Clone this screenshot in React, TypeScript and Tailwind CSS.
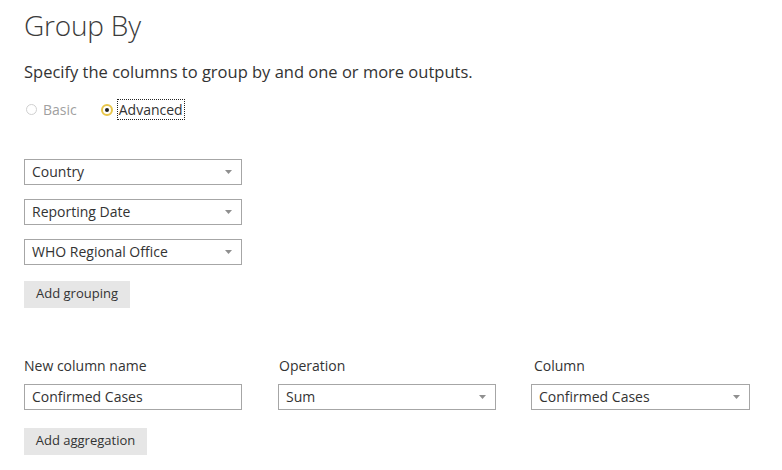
import React from "react";

const font = { fontFamily: '"Open Sans", "Noto Sans", sans-serif' };

const Caret = () => (
  <svg width="7" height="4" viewBox="0 0 7 4" className="shrink-0">
    <path d="M0 0h7L3.5 4z" fill="#8f8f8f" />
  </svg>
);

const Select = ({ value, w = "w-[218px]" }: { value: string; w?: string }) => (
  <div className={`${w} h-[26px] border border-[#a6a6a6] bg-white flex items-center justify-between pl-[7px] pr-[9px]`}>
    <span className="text-[14px] text-[#333] leading-none">{value}</span>
    <Caret />
  </div>
);

const GrayButton = ({ label, w }: { label: string; w: string }) => (
  <div className={`${w} h-[27px] bg-[#e6e6e6] flex items-center justify-center text-[13px] text-[#333]`}>
    {label}
  </div>
);

export default function App() {
  return (
    <div className="w-[782px] h-[470px] bg-white overflow-hidden pl-[24px]" style={font}>
      <h1 className="text-[28px] font-light text-[#3b3b3b] leading-none pt-[11px] tracking-[-0.2px]">Group By</h1>

      <p className="text-[16.5px] text-[#333] mt-[25px] leading-none">
        Specify the columns to group by and one or more outputs.
      </p>

      <div className="flex items-center mt-[18px] h-[22px]">
        <div className="flex items-center">
          <span className="w-[11px] h-[11px] rounded-full border border-[#d0d0d0] bg-white ml-[2px]"></span>
          <span className="text-[14px] text-[#a0a0a0] ml-[6px]">Basic</span>
        </div>
        <div className="flex items-center ml-[24px]">
          <span className="w-[12px] h-[12px] rounded-full border-2 border-[#e8c64a] bg-white flex items-center justify-center">
            <span className="w-[4px] h-[4px] rounded-full bg-[#222]"></span>
          </span>
          <span className="text-[14px] text-[#333] ml-[4px] border border-dotted border-[#222] px-[1px] leading-[19px]">
            Advanced
          </span>
        </div>
      </div>

      <div className="flex flex-col gap-[14px] mt-[38px]">
        <Select value="Country" />
        <Select value="Reporting Date" />
        <Select value="WHO Regional Office" />
      </div>

      <div className="mt-[16px]">
        <GrayButton label="Add grouping" w="w-[106px]" />
      </div>

      <div className="flex mt-[51px]">
        <div className="w-[254px]">
          <div className="text-[14px] text-[#333] leading-none h-[17px]">New column name</div>
          <div className="w-[218px] h-[26px] border border-[#a6a6a6] bg-white flex items-center pl-[7px] mt-[8px]">
            <span className="text-[14px] text-[#333] leading-none">Confirmed Cases</span>
          </div>
        </div>
        <div className="w-[253px]">
          <div className="text-[14px] text-[#333] leading-none h-[17px] pl-[1px]">Operation</div>
          <div className="mt-[8px]">
            <Select value="Sum" />
          </div>
        </div>
        <div>
          <div className="text-[14px] text-[#333] leading-none h-[17px] pl-[3px]">Column</div>
          <div className="mt-[8px]">
            <Select value="Confirmed Cases" w="w-[219px]" />
          </div>
        </div>
      </div>

      <div className="mt-[18px]">
        <GrayButton label="Add aggregation" w="w-[123px]" />
      </div>
    </div>
  );
}
